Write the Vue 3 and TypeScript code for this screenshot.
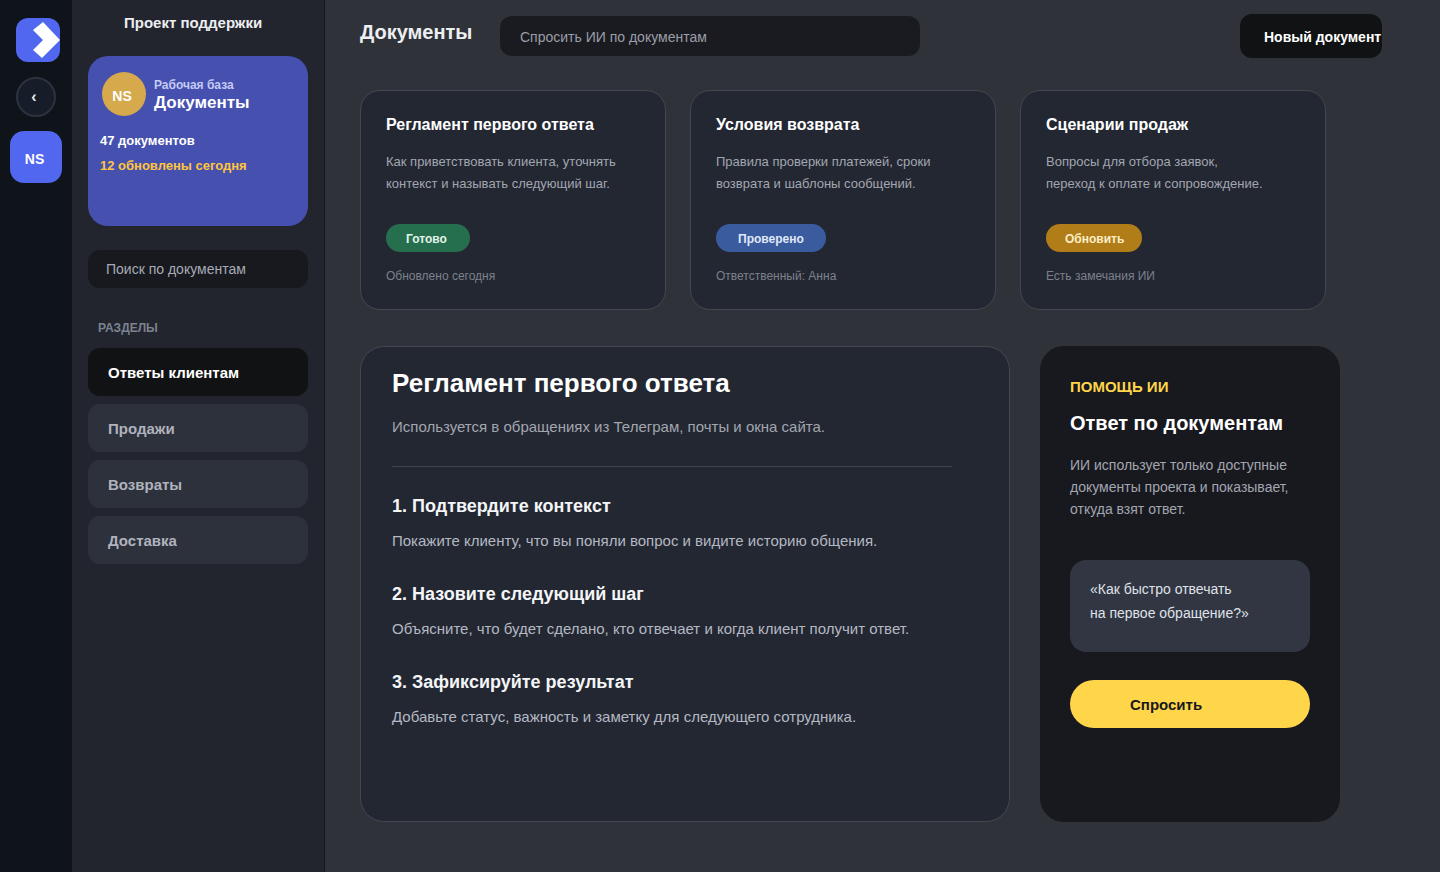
<template>
  <div class="app">
    <!-- узкая колонка -->
    <aside class="rail">
      <div class="logo">
        <svg width="44" height="44" viewBox="0 0 44 44"><polygon points="27,4 44,22 26,40 17,32 27,22 17,12" fill="#fff" /></svg>
      </div>
      <button class="back">‹</button>
      <div class="rail-user">NS</div>
    </aside>

    <aside class="sidebar">
      <div class="project">Проект поддержки</div>
      <div class="base-card">
        <div class="base-head">
          <div class="avatar">NS</div>
          <div class="base-names">
            <div class="base-label">Рабочая база</div>
            <div class="base-title">Документы</div>
          </div>
        </div>
        <div class="base-count">47 документов</div>
        <div class="base-updated">12 обновлены сегодня</div>
      </div>
      <div class="side-search">Поиск по документам</div>
      <div class="side-label">РАЗДЕЛЫ</div>
      <nav class="nav">
        <div v-for="(item, index) in sections" :key="item" class="nav-item" :class="{ active: index === 0 }">{{ item }}</div>
      </nav>
    </aside>

    <main class="main">
      <header class="topbar">
        <h1 class="page-title">Документы</h1>
        <div class="ask">Спросить ИИ по документам</div>
        <button class="new-doc">Новый документ</button>
      </header>

      <section class="cards">
        <article v-for="card in cards" :key="card.title" class="card">
          <h2 class="card-title">{{ card.title }}</h2>
          <p class="card-text">{{ card.line1 }}<br />{{ card.line2 }}</p>
          <span class="pill" :class="card.tone">{{ card.status }}</span>
          <div class="card-meta">{{ card.meta }}</div>
        </article>
      </section>

      <section class="lower">
        <article class="doc">
          <h2 class="doc-title">Регламент первого ответа</h2>
          <p class="doc-sub">Используется в обращениях из Телеграм, почты и окна сайта.</p>
          <hr class="doc-line" />
          <div v-for="step in steps" :key="step.title" class="step">
            <h3 class="step-title">{{ step.title }}</h3>
            <p class="step-text">{{ step.text }}</p>
          </div>
        </article>

        <aside class="ai">
          <div class="ai-label">ПОМОЩЬ ИИ</div>
          <h2 class="ai-title">Ответ по документам</h2>
          <p class="ai-text">ИИ использует только доступные<br />документы проекта и показывает,<br />откуда взят ответ.</p>
          <div class="quote">«Как быстро отвечать<br />на первое обращение?»</div>
          <button class="ask-btn">Спросить</button>
        </aside>
      </section>
    </main>
  </div>
</template>

<script setup lang="ts">
const sections = ['Ответы клиентам', 'Продажи', 'Возвраты', 'Доставка'];

const cards = [
  {
    title: 'Регламент первого ответа',
    line1: 'Как приветствовать клиента, уточнять',
    line2: 'контекст и называть следующий шаг.',
    status: 'Готово',
    tone: 'green',
    meta: 'Обновлено сегодня'
  },
  {
    title: 'Условия возврата',
    line1: 'Правила проверки платежей, сроки',
    line2: 'возврата и шаблоны сообщений.',
    status: 'Проверено',
    tone: 'blue',
    meta: 'Ответственный: Анна'
  },
  {
    title: 'Сценарии продаж',
    line1: 'Вопросы для отбора заявок,',
    line2: 'переход к оплате и сопровождение.',
    status: 'Обновить',
    tone: 'amber',
    meta: 'Есть замечания ИИ'
  }
];

const steps = [
  { title: '1. Подтвердите контекст', text: 'Покажите клиенту, что вы поняли вопрос и видите историю общения.' },
  { title: '2. Назовите следующий шаг', text: 'Объясните, что будет сделано, кто отвечает и когда клиент получит ответ.' },
  { title: '3. Зафиксируйте результат', text: 'Добавьте статус, важность и заметку для следующего сотрудника.' }
];
</script>

<style>
html,
body {
  margin: 0;
  background: #2f3238;
}
</style>

<style scoped>
.app {
  display: flex;
  width: 1440px;
  height: 872px;
  overflow: hidden;
  background: #2f3238;
  font-family: "Liberation Sans", Arial, sans-serif;
  color: #fff;
}

h1,
h2,
h3,
p {
  margin: 0;
}

button {
  border: 0;
  font-family: inherit;
}

.rail {
  flex: none;
  width: 72px;
  background: #0f131a;
  padding-top: 18px;
  box-sizing: border-box;
}

.logo {
  width: 44px;
  height: 44px;
  margin-left: 16px;
  border-radius: 12px;
  background: #5267f0;
}

.logo svg {
  display: block;
}

.back {
  display: block;
  width: 40px;
  height: 40px;
  margin: 15px 0 0 16px;
  padding: 0 4px 1px 0;
  border-radius: 50%;
  border: 2px solid #2b3340;
  background: #171d28;
  color: #e8eaf0;
  font-size: 16px;
  font-weight: 700;
  line-height: 1;
}

.rail-user {
  width: 49px;
  height: 52px;
  margin: 14px 0 0 10px;
  padding-right: 3px;
  border-radius: 14px;
  background: #5267f0;
  font-size: 14px;
  font-weight: 700;
  line-height: 57px;
  text-align: center;
}

.sidebar {
  flex: none;
  width: 253px;
  box-sizing: border-box;
  padding: 0 16px;
  background: #22252d;
  border-right: 1px solid #14161a;
}

.project {
  padding: 14px 0 0 36px;
  height: 56px;
  box-sizing: border-box;
  font-size: 15px;
  font-weight: 700;
  line-height: 18px;
  color: #eceef2;
}

.base-card {
  height: 170px;
  box-sizing: border-box;
  padding: 16px 12px;
  border-radius: 20px;
  background: #4650ae;
}

.base-head {
  display: flex;
  align-items: center;
  gap: 8px;
  padding-left: 2px;
}

.avatar {
  width: 40px;
  height: 44px;
  padding-right: 4px;
  border-radius: 50%;
  background: #d6a94c;
  font-size: 14px;
  font-weight: 700;
  line-height: 49px;
  text-align: center;
}

.base-names {
  padding-top: 3px;
}

.base-label {
  font-size: 12px;
  font-weight: 700;
  line-height: 14px;
  color: #c4caf6;
}

.base-title {
  margin-top: 1px;
  font-size: 17px;
  font-weight: 700;
  line-height: 20px;
}

.base-count {
  margin-top: 17px;
  font-size: 13px;
  font-weight: 700;
  line-height: 16px;
}

.base-updated {
  margin-top: 9px;
  font-size: 13px;
  font-weight: 700;
  line-height: 16px;
  color: #ffc53d;
}

.side-search {
  margin-top: 24px;
  height: 38px;
  padding-left: 18px;
  border-radius: 12px;
  background: #17191f;
  color: #a7abb5;
  font-size: 14px;
  line-height: 38px;
}

.side-label {
  margin: 33px 0 13px 10px;
  font-size: 12px;
  font-weight: 700;
  line-height: 14px;
  color: #7c8290;
}

.nav {
  display: flex;
  flex-direction: column;
  gap: 8px;
}

.nav-item {
  height: 48px;
  padding-left: 20px;
  border-radius: 12px;
  background: #2d313b;
  color: #afb3be;
  font-size: 15px;
  font-weight: 700;
  line-height: 50px;
}

.nav-item.active {
  background: #111214;
  color: #fff;
}

.main {
  flex: 1;
  padding-left: 35px;
}

.topbar {
  display: flex;
  align-items: flex-start;
  height: 90px;
}

.page-title {
  width: 140px;
  padding-top: 20px;
  font-size: 20px;
  font-weight: 700;
  line-height: 24px;
  color: #eceef2;
}

.ask {
  width: 400px;
  height: 40px;
  margin-top: 16px;
  padding-left: 20px;
  border-radius: 12px;
  background: #1a1b20;
  color: #9a9ea8;
  font-size: 14px;
  line-height: 42px;
}

.new-doc {
  width: 142px;
  height: 44px;
  margin: 14px 0 0 320px;
  padding: 2px 0 0 24px;
  border-radius: 12px;
  background: #111214;
  color: #fff;
  font-size: 14px;
  font-weight: 700;
  text-align: left;
  white-space: nowrap;
}

.cards {
  display: flex;
  gap: 24px;
}

.card {
  width: 306px;
  height: 220px;
  box-sizing: border-box;
  padding: 25px 24px 0 25px;
  border: 1px solid #434753;
  border-radius: 20px;
  background: #232732;
}

.card-title {
  font-size: 16px;
  font-weight: 700;
  line-height: 18px;
}

.card-text {
  margin-top: 17px;
  font-size: 13px;
  line-height: 22px;
  color: #a2a6b0;
}

.pill {
  display: inline-block;
  height: 28px;
  margin-top: 29px;
  padding: 0 22px;
  border-radius: 14px;
  font-size: 12px;
  font-weight: 700;
  line-height: 30px;
}

.pill.green {
  background: #256e4e;
  padding: 0 23px 0 20px;
  color: #e4f4ec;
}

.pill.blue {
  background: #3a5c9e;
  color: #e0e8fa;
}

.pill.amber {
  background: #b07d18;
  padding: 0 18px 0 19px;
  color: #fdeec8;
}

.card-meta {
  margin-top: 17px;
  font-size: 12px;
  line-height: 14px;
  color: #7c808c;
}

.lower {
  display: flex;
  gap: 30px;
  margin-top: 36px;
}

.doc {
  width: 650px;
  height: 476px;
  box-sizing: border-box;
  padding: 21px 57px 0 31px;
  border: 1px solid #434753;
  border-radius: 24px;
  background: #232732;
}

.doc-title {
  font-size: 26px;
  font-weight: 700;
  line-height: 30px;
}

.doc-sub {
  margin-top: 19px;
  font-size: 15px;
  line-height: 20px;
  color: #a2a6b0;
}

.doc-line {
  height: 1px;
  margin: 29px 0 0;
  border: 0;
  background: #3f434e;
}

.step {
  margin-top: 29px;
}

.step + .step {
  margin-top: 33px;
}

.step-title {
  font-size: 18px;
  font-weight: 700;
  line-height: 20px;
  color: #f4f5f7;
}

.step-text {
  margin-top: 15px;
  font-size: 15px;
  line-height: 20px;
  color: #b4b8c2;
}

.ai {
  width: 300px;
  height: 476px;
  box-sizing: border-box;
  padding: 32px 30px 0;
  border-radius: 24px;
  background: #18191f;
}

.ai-label {
  font-size: 15px;
  font-weight: 700;
  line-height: 18px;
  color: #ffd54a;
}

.ai-title {
  margin-top: 14px;
  font-size: 20px;
  font-weight: 700;
  line-height: 26px;
}

.ai-text {
  margin-top: 18px;
  font-size: 14px;
  line-height: 22px;
  color: #a2a6b0;
}

.quote {
  height: 92px;
  box-sizing: border-box;
  margin-top: 40px;
  padding: 17px 20px 0;
  border-radius: 16px;
  background: #323642;
  font-size: 14px;
  line-height: 24px;
  color: #dfe2e8;
}

.ask-btn {
  display: block;
  width: 240px;
  height: 48px;
  margin-top: 28px;
  padding: 0 0 0 60px;
  border-radius: 24px;
  background: #ffd54a;
  color: #17181c;
  font-size: 15px;
  font-weight: 700;
  text-align: left;
}
</style>
